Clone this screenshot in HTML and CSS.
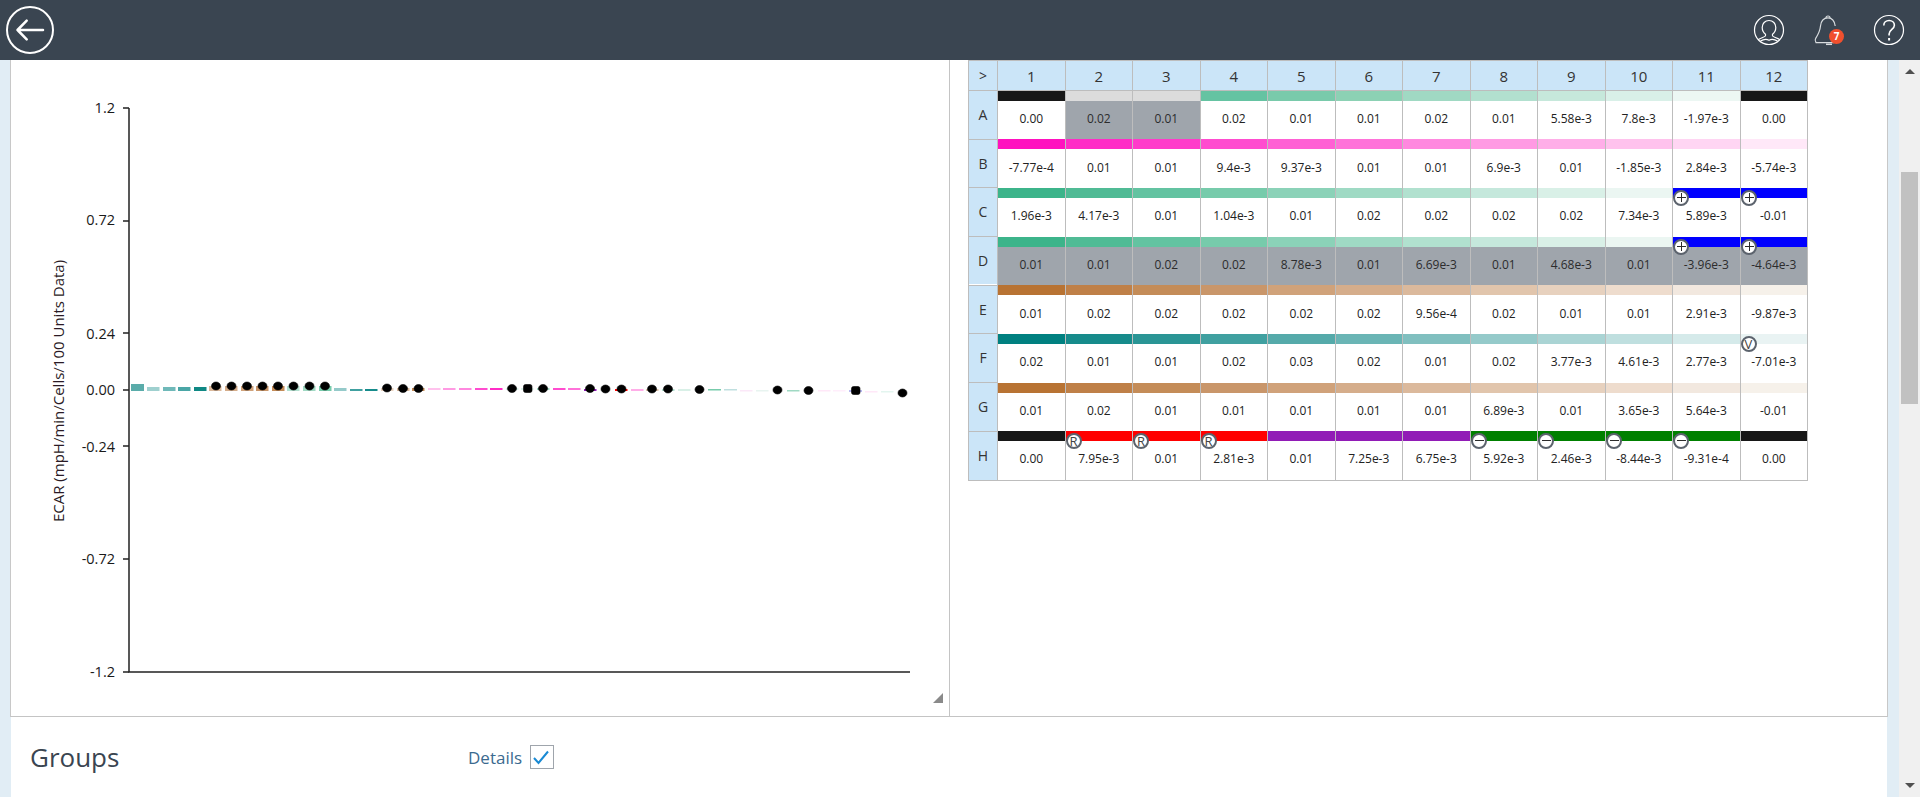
FILE: index.html
```html
<!DOCTYPE html>
<html lang="en">
<head>
    <meta charset="UTF-8">
    <title>ECAR Plate View</title>
    <link rel="stylesheet" href="styles.css">
</head>
<body>
    <header class="topbar">
        <svg class="back-icon" width="48" height="48" viewBox="0 0 48 48" fill="none" stroke="#fff" stroke-width="2" stroke-linecap="round" stroke-linejoin="round">
            <circle cx="24" cy="24" r="23"/>
            <path d="M37 24H11.500M20.700 14.700L11.500 24L20.700 33.300" stroke-width="2.500"/>
        </svg>
        <div class="topbar-icons">
            <svg width="32" height="32" viewBox="0 0 32 32" fill="none" stroke="#fff" stroke-width="1.200">
                <circle cx="16" cy="16" r="14.500"/>
                <path d="M16 6.500c-4 0-6.800 3-6.800 7 0 2.800 1.300 5.200 3.300 6.700v1.500c0 1.300-4.500 1.800-7.500 4"/>
                <path d="M16 6.500c4 0 6.800 3 6.800 7 0 2.800-1.300 5.200-3.300 6.700v1.500c0 1.300 4.500 1.800 7.500 4"/>
                <path d="M7.500 27c3-1.800 5.500-2.300 8.500-.8 3-1.500 5.500-1 8.500.8"/>
            </svg>
            <div class="bell">
                <svg width="32" height="32" viewBox="2 0 32 32" fill="none" stroke="#d8dcdf" stroke-width="1.200">
                    <path d="M15 4c0-2.700 4-2.700 4 0"/>
                    <path d="M17 3.800c-4.500 0-7 3.200-7.500 8.200-.4 4-2 8-4.800 12.300-.8 1.300-.6 3 .3 4.300h18"/>
                    <path d="M17 3.800c4 0 6.500 3 7.200 8.200"/>
                    <path d="M15 30.300h6" stroke-width="1.500"/>
                </svg>
                <span class="badge">7</span>
            </div>
            <svg width="32" height="32" viewBox="0 0 32 32" fill="none" stroke="#fff" stroke-width="1.200">
                <circle cx="16" cy="16" r="14.500"/>
                <path d="M10.800 11.500c0-3 2.300-5 5.300-5 3 0 5.300 2 5.300 4.800 0 4-5.300 4.300-5.300 8.700v1.500" stroke-width="1.600"/>
                <path d="M16.100 24v2.500" stroke-width="2"/>
            </svg>
        </div>
    </header>

    <div class="page">
        <main class="content">
            <section class="panels">
                <div class="chart-panel">
                    <svg class="chart" width="938" height="656" viewBox="11 60 938 656">
                        <text class="axis-title" transform="translate(64 391) rotate(-90)">ECAR (mpH/min/Cells/100 Units Data)</text>

                        <g class="axis-labels">
                            <text x="115" y="113">1.2</text>
                            <text x="115" y="225">0.72</text>
                            <text x="115" y="339">0.24</text>
                            <text x="115" y="395">0.00</text>
                            <text x="115" y="452">-0.24</text>
                            <text x="115" y="564">-0.72</text>
                            <text x="115" y="677">-1.2</text>
                        </g>
                        <g class="axis-lines">
                            <path d="M129 108V672H910"/>
                            <path d="M123 108H129M123 221H129M123 333H129M123 390H129M123 446H129M123 559H129M123 672H129"/>
                        </g>

                        <g class="bars">
                            <rect x="131" y="384" width="13" height="7" fill="#5aacaa"/>
                            <rect x="147" y="387" width="12.500" height="4" fill="#9fd0cf"/>
                            <rect x="163" y="387" width="12.500" height="4" fill="#6fb9b9"/>
                            <rect x="178" y="387" width="12.500" height="4" fill="#4aa6a6"/>
                            <rect x="194" y="387" width="12.500" height="4" fill="#0f8884"/>
                            <rect x="209" y="386" width="12.500" height="5" fill="#dbb99c"/>
                            <rect x="225" y="386" width="12.500" height="5" fill="#d5ad8b"/>
                            <rect x="241" y="386" width="12.500" height="5" fill="#d0a27a"/>
                            <rect x="256" y="386" width="12.500" height="5" fill="#c9966a"/>
                            <rect x="272" y="386" width="12.500" height="5" fill="#c48c58"/>
                            <rect x="287" y="386" width="12.500" height="5" fill="#b2e0cf"/>
                            <rect x="303" y="386" width="12.500" height="5" fill="#a0d9c3"/>
                            <rect x="319" y="386" width="12.500" height="5" fill="#77cbab"/>
                            <rect x="334" y="388" width="12.500" height="3" fill="#95caca"/>
                            <rect x="350" y="389" width="12.500" height="2" fill="#40a0a0"/>
                            <rect x="365" y="389" width="12.500" height="2" fill="#168b8b"/>
                            <rect x="381" y="388" width="12.500" height="3" fill="#e7d1be"/>
                            <rect x="397" y="388" width="12.500" height="3" fill="#dbb99c"/>
                            <rect x="412" y="388" width="12.500" height="3" fill="#c48c58"/>
                            <rect x="428" y="388" width="12.500" height="2" fill="#ffc2ed"/>
                            <rect x="443" y="388" width="12.500" height="2" fill="#ff9ae3"/>
                            <rect x="459" y="388" width="12.500" height="2" fill="#ff88df"/>
                            <rect x="475" y="388" width="12.500" height="2" fill="#ff4ccf"/>
                            <rect x="490" y="388" width="12.500" height="2" fill="#ff2cc6"/>
                            <rect x="506" y="388" width="12.500" height="2" fill="#d9f0e7"/>
                            <rect x="521" y="388" width="12.500" height="2" fill="#d9f0e7"/>
                            <rect x="537" y="388" width="12.500" height="2" fill="#a0d9c3"/>
                            <rect x="553" y="388" width="12.500" height="2" fill="#ff4ccf"/>
                            <rect x="568" y="388" width="12.500" height="2" fill="#ff72d9"/>
                            <rect x="584" y="389" width="12.500" height="2" fill="#911cb6"/>
                            <rect x="615" y="389" width="12.500" height="2" fill="#ff0000"/>
                            <rect x="631" y="389" width="12.500" height="2" fill="#ffaee8"/>
                            <rect x="646" y="389" width="12.500" height="2" fill="#e1c5ac"/>
                            <rect x="662" y="389" width="12.500" height="2" fill="#b2e0cf"/>
                            <rect x="678" y="389" width="12.500" height="2" fill="#d9f0e7"/>
                            <rect x="708" y="389" width="13" height="1.500" fill="#77cbab"/>
                            <rect x="724" y="389" width="13" height="1.500" fill="#bfdfdf"/>
                            <rect x="740" y="390" width="12.500" height="1.500" fill="#fbe8f8"/>
                            <rect x="756" y="390" width="12.500" height="1.500" fill="#e8f4f0"/>
                            <rect x="787" y="390" width="12.500" height="1.500" fill="#a0d9c3"/>
                            <rect x="818" y="390" width="12.500" height="1.500" fill="#ffe8f8"/>
                            <rect x="833" y="390" width="12.500" height="1.500" fill="#ffeefb"/>
                            <rect x="849" y="390" width="13" height="2" fill="#b8b8f0"/>
                            <rect x="865" y="391" width="12.500" height="1.500" fill="#ffe8f8"/>
                            <rect x="881" y="391" width="12.500" height="1.500" fill="#e3f5ef"/>
                        </g>

                        <g class="dots">
                            <ellipse cx="216" cy="386" rx="4.500" ry="4"/>
                            <ellipse cx="231.500" cy="386" rx="4.500" ry="4"/>
                            <ellipse cx="247" cy="386" rx="4.500" ry="4"/>
                            <ellipse cx="262.500" cy="386" rx="4.500" ry="4"/>
                            <ellipse cx="278" cy="386" rx="4.500" ry="4"/>
                            <ellipse cx="293.500" cy="386" rx="4.500" ry="4"/>
                            <ellipse cx="309.500" cy="386" rx="4.500" ry="4"/>
                            <ellipse cx="325" cy="386" rx="4.500" ry="4"/>
                            <ellipse cx="387" cy="388" rx="4.500" ry="4"/>
                            <ellipse cx="403" cy="388.500" rx="4.500" ry="4"/>
                            <ellipse cx="418.500" cy="388.500" rx="4.500" ry="4"/>
                            <ellipse cx="512" cy="388.500" rx="4.500" ry="4"/>
                            <rect x="523.500" y="384.500" width="8.500" height="8" rx="2"/>
                            <ellipse cx="543" cy="388.500" rx="4.500" ry="4"/>
                            <ellipse cx="590" cy="388.500" rx="4.500" ry="4"/>
                            <ellipse cx="605.500" cy="389" rx="4.500" ry="4"/>
                            <ellipse cx="621.500" cy="389" rx="4.500" ry="4"/>
                            <ellipse cx="652" cy="389" rx="4.500" ry="4"/>
                            <ellipse cx="668" cy="389" rx="4.500" ry="4"/>
                            <ellipse cx="699.500" cy="389.500" rx="4.500" ry="4"/>
                            <ellipse cx="777.500" cy="390" rx="4.500" ry="4"/>
                            <ellipse cx="808.500" cy="390.500" rx="4.500" ry="4"/>
                            <rect x="851.500" y="386.500" width="8.500" height="8" rx="2"/>
                            <ellipse cx="902.500" cy="393" rx="4.500" ry="4"/>
                        </g>

                        <path class="handle" d="M933 703L943 693V703Z"/>
                    </svg>
                </div>

                <div class="plate-panel">
                    <table class="plate">
                        <thead>
                            <tr><th>&gt;</th><th>1</th><th>2</th><th>3</th><th>4</th><th>5</th><th>6</th><th>7</th><th>8</th><th>9</th><th>10</th><th>11</th><th>12</th></tr>
                        </thead>
                        <tbody>
                            <tr>
                                <th>A</th>
                                <td><i class="bar" style="background:#171717"></i>0.00</td>
                                <td class="off"><i class="bar" style="background:#dcdcdc"></i>0.02</td>
                                <td class="off"><i class="bar" style="background:#dcdcdc"></i>0.01</td>
                                <td><i class="bar" style="background:#65c3a2"></i>0.02</td>
                                <td><i class="bar" style="background:#79caab"></i>0.01</td>
                                <td><i class="bar" style="background:#8cd1b4"></i>0.01</td>
                                <td><i class="bar" style="background:#a0d9c3"></i>0.02</td>
                                <td><i class="bar" style="background:#b2e0cf"></i>0.01</td>
                                <td><i class="bar" style="background:#c6e8db"></i>5.58e-3</td>
                                <td><i class="bar" style="background:#d9f0e8"></i>7.8e-3</td>
                                <td><i class="bar" style="background:#ecf7f3"></i>-1.97e-3</td>
                                <td><i class="bar" style="background:#171717"></i>0.00</td>
                            </tr>
                            <tr>
                                <th>B</th>
                                <td><i class="bar" style="background:#ff12bf"></i>-7.77e-4</td>
                                <td><i class="bar" style="background:#ff2cc6"></i>0.01</td>
                                <td><i class="bar" style="background:#ff3bca"></i>0.01</td>
                                <td><i class="bar" style="background:#ff4ccf"></i>9.4e-3</td>
                                <td><i class="bar" style="background:#ff60d4"></i>9.37e-3</td>
                                <td><i class="bar" style="background:#ff72d9"></i>0.01</td>
                                <td><i class="bar" style="background:#ff88df"></i>0.01</td>
                                <td><i class="bar" style="background:#ff9ae3"></i>6.9e-3</td>
                                <td><i class="bar" style="background:#ffaee8"></i>0.01</td>
                                <td><i class="bar" style="background:#ffc2ed"></i>-1.85e-3</td>
                                <td><i class="bar" style="background:#ffd5f3"></i>2.84e-3</td>
                                <td><i class="bar" style="background:#ffe8f8"></i>-5.74e-3</td>
                            </tr>
                            <tr>
                                <th>C</th>
                                <td><i class="bar" style="background:#3cb48a"></i>1.96e-3</td>
                                <td><i class="bar" style="background:#50bb95"></i>4.17e-3</td>
                                <td><i class="bar" style="background:#63c3a1"></i>0.01</td>
                                <td><i class="bar" style="background:#77cbab"></i>1.04e-3</td>
                                <td><i class="bar" style="background:#8bd2b8"></i>0.01</td>
                                <td><i class="bar" style="background:#9fdac4"></i>0.02</td>
                                <td><i class="bar" style="background:#b1e1cf"></i>0.02</td>
                                <td><i class="bar" style="background:#c5e8dc"></i>0.02</td>
                                <td><i class="bar" style="background:#d9f0e7"></i>0.02</td>
                                <td><i class="bar" style="background:#ebf6f2"></i>7.34e-3</td>
                                <td><i class="bar" style="background:#0000ff"></i><b class="mark mark-plus"></b>5.89e-3</td>
                                <td><i class="bar" style="background:#0000ff"></i><b class="mark mark-plus"></b>-0.01</td>
                            </tr>
                            <tr class="row-end">
                                <th>D</th>
                                <td class="off"><i class="bar" style="background:#3cb48a"></i>0.01</td>
                                <td class="off"><i class="bar" style="background:#50bb95"></i>0.01</td>
                                <td class="off"><i class="bar" style="background:#63c3a1"></i>0.02</td>
                                <td class="off"><i class="bar" style="background:#77cbab"></i>0.02</td>
                                <td class="off"><i class="bar" style="background:#8bd2b8"></i>8.78e-3</td>
                                <td class="off"><i class="bar" style="background:#9fdac4"></i>0.01</td>
                                <td class="off"><i class="bar" style="background:#b1e1cf"></i>6.69e-3</td>
                                <td class="off"><i class="bar" style="background:#c5e8dc"></i>0.01</td>
                                <td class="off"><i class="bar" style="background:#d9f0e7"></i>4.68e-3</td>
                                <td class="off"><i class="bar" style="background:#ebf6f2"></i>0.01</td>
                                <td class="off"><i class="bar" style="background:#0000ff"></i><b class="mark mark-plus"></b>-3.96e-3</td>
                                <td class="off"><i class="bar" style="background:#0000ff"></i><b class="mark mark-plus"></b>-4.64e-3</td>
                            </tr>
                            <tr>
                                <th>E</th>
                                <td><i class="bar" style="background:#b87333"></i>0.01</td>
                                <td><i class="bar" style="background:#bf8048"></i>0.02</td>
                                <td><i class="bar" style="background:#c48c58"></i>0.02</td>
                                <td><i class="bar" style="background:#c9966a"></i>0.02</td>
                                <td><i class="bar" style="background:#d0a27a"></i>0.02</td>
                                <td><i class="bar" style="background:#d5ad8b"></i>0.02</td>
                                <td><i class="bar" style="background:#dbb99c"></i>9.56e-4</td>
                                <td><i class="bar" style="background:#e1c5ac"></i>0.02</td>
                                <td><i class="bar" style="background:#e7d1be"></i>0.01</td>
                                <td><i class="bar" style="background:#eedccd"></i>0.01</td>
                                <td><i class="bar" style="background:#f2e8df"></i>2.91e-3</td>
                                <td><i class="bar" style="background:#f6f1ea"></i>-9.87e-3</td>
                            </tr>
                            <tr>
                                <th>F</th>
                                <td><i class="bar" style="background:#008080"></i>0.02</td>
                                <td><i class="bar" style="background:#168b8b"></i>0.01</td>
                                <td><i class="bar" style="background:#2a9595"></i>0.01</td>
                                <td><i class="bar" style="background:#40a0a0"></i>0.02</td>
                                <td><i class="bar" style="background:#55aaaa"></i>0.03</td>
                                <td><i class="bar" style="background:#6ab5b5"></i>0.02</td>
                                <td><i class="bar" style="background:#80bfbf"></i>0.01</td>
                                <td><i class="bar" style="background:#95caca"></i>0.02</td>
                                <td><i class="bar" style="background:#aad4d4"></i>3.77e-3</td>
                                <td><i class="bar" style="background:#bfdfdf"></i>4.61e-3</td>
                                <td><i class="bar" style="background:#d5eaea"></i>2.77e-3</td>
                                <td><i class="bar" style="background:#e9f3f3"></i><b class="mark">V</b>-7.01e-3</td>
                            </tr>
                            <tr>
                                <th>G</th>
                                <td><i class="bar" style="background:#b87333"></i>0.01</td>
                                <td><i class="bar" style="background:#bf8048"></i>0.02</td>
                                <td><i class="bar" style="background:#c48c58"></i>0.01</td>
                                <td><i class="bar" style="background:#c9966a"></i>0.01</td>
                                <td><i class="bar" style="background:#d0a27a"></i>0.01</td>
                                <td><i class="bar" style="background:#d5ad8b"></i>0.01</td>
                                <td><i class="bar" style="background:#dbb99c"></i>0.01</td>
                                <td><i class="bar" style="background:#e1c5ac"></i>6.89e-3</td>
                                <td><i class="bar" style="background:#e7d1be"></i>0.01</td>
                                <td><i class="bar" style="background:#eedccd"></i>3.65e-3</td>
                                <td><i class="bar" style="background:#f2e8df"></i>5.64e-3</td>
                                <td><i class="bar" style="background:#f6f1ea"></i>-0.01</td>
                            </tr>
                            <tr>
                                <th>H</th>
                                <td><i class="bar" style="background:#171717"></i>0.00</td>
                                <td><i class="bar" style="background:#ff0000"></i><b class="mark">R</b>7.95e-3</td>
                                <td><i class="bar" style="background:#ff0000"></i><b class="mark">R</b>0.01</td>
                                <td><i class="bar" style="background:#ff0000"></i><b class="mark">R</b>2.81e-3</td>
                                <td><i class="bar" style="background:#911cb6"></i>0.01</td>
                                <td><i class="bar" style="background:#911cb6"></i>7.25e-3</td>
                                <td><i class="bar" style="background:#911cb6"></i>6.75e-3</td>
                                <td><i class="bar" style="background:#008000"></i><b class="mark mark-minus"></b>5.92e-3</td>
                                <td><i class="bar" style="background:#008000"></i><b class="mark mark-minus"></b>2.46e-3</td>
                                <td><i class="bar" style="background:#008000"></i><b class="mark mark-minus"></b>-8.44e-3</td>
                                <td><i class="bar" style="background:#008000"></i><b class="mark mark-minus"></b>-9.31e-4</td>
                                <td><i class="bar" style="background:#171717"></i>0.00</td>
                            </tr>
                        </tbody>
                    </table>
                </div>
            </section>

            <section class="groups">
                <h2>Groups</h2>
                <label class="details">Details
                    <span class="checkbox">
                        <svg width="22" height="22" viewBox="0 0 22 22" fill="none" stroke="#1a8ad4" stroke-width="2"><path d="M3 12L7.500 17L17 5.500"/></svg>
                    </span>
                </label>
            </section>
        </main>
        <aside class="scrollbar">
            <span class="arrow-up"></span>
            <div class="thumb"></div>
            <span class="arrow-down"></span>
        </aside>
    </div>
</body>
</html>
```

FILE: styles.css
```css
* {
    box-sizing: border-box;
}
html, body {
    margin: 0;
    height: 100%;
    overflow: hidden;
}
body {
    font-family: "Open Sans", sans-serif;
    background-color: #e1edf5;
    color: #222;
}

.topbar {
    height: 60px;
    background-color: #3a4551;
    display: flex;
    align-items: center;
    justify-content: space-between;
    padding: 0 15px 0 6px;
}
.topbar-icons {
    display: flex;
    align-items: center;
    gap: 28px;
}
.bell {
    position: relative;
    width: 32px;
    height: 32px;
}
.bell svg {
    display: block;
}
.badge {
    position: absolute;
    left: 16px;
    top: 15px;
    width: 15px;
    height: 15px;
    border-radius: 50%;
    background-color: #f0502e;
    color: #fff;
    font-size: 10px;
    font-weight: 700;
    line-height: 15px;
    text-align: center;
}

.page {
    display: flex;
    height: 737px;
    padding-left: 10px;
}
.content {
    width: 1878px;
}
.panels {
    display: flex;
    height: 657px;
    background: #fff;
    border-left: 1px solid #c8c8c8;
    border-right: 1px solid #c8c8c8;
    border-bottom: 1px solid #c4c4c4;
}
.chart-panel {
    width: 939px;
    border-right: 1px solid #c4c4c4;
}
.chart {
    display: block;
}
.axis-title {
    font-size: 15px;
    fill: #2a1a25;
    text-anchor: middle;
}
.axis-labels text {
    font-size: 14.500px;
    fill: #1a1a1a;
    text-anchor: end;
}
.axis-lines path {
    fill: none;
    stroke: #222;
    stroke-width: 1.500;
}
.dots {
    fill: #000;
    stroke: #000;
    stroke-width: 0.600;
}
.handle {
    fill: #8a8a8a;
}

.plate-panel {
    padding-left: 18px;
}
.plate {
    border-collapse: collapse;
    table-layout: fixed;
    width: 839px;
    font-size: 12px;
}
.plate th {
    background-color: #cbe5f8;
    border: 1px solid #bdbdbd;
    font-size: 14px;
    font-weight: 400;
    color: #333;
    width: 29px;
    vertical-align: middle;
    padding: 0 0 1px;
}
.plate thead th {
    height: 30px;
    width: 67.500px;
    padding: 0;
    font-size: 15px;
}
.plate thead th:first-child {
    width: 29px;
    font-size: 14px;
}
.plate tbody th {
    height: 48.700px;
}
.plate .row-end th {
    box-shadow: inset 0 -1px #fff;
}
.plate td {
    position: relative;
    height: 48.700px;
    border-left: 1px solid #bdbdbd;
    border-right: 1px solid #bdbdbd;
    text-align: center;
    vertical-align: middle;
    padding: 8px 0 0;
    line-height: 16px;
}
.plate tbody tr:last-child td {
    border-bottom: 1px solid #bdbdbd;
}
.plate td.off {
    background-color: #9fa5ac;
    color: #2c2c2c;
}
.bar {
    position: absolute;
    left: 0;
    right: 0;
    top: 0;
    height: 10px;
}
.mark {
    position: absolute;
    left: 0;
    top: 2px;
    width: 16px;
    height: 16px;
    border: 2px solid #5c636d;
    border-radius: 50%;
    background-color: #fff;
    color: #444;
    font-size: 13px;
    font-weight: 400;
    line-height: 12px;
    text-align: center;
}
.mark-plus::before,
.mark-plus::after,
.mark-minus::before {
    content: "";
    position: absolute;
    background-color: #2c2c2c;
}
.mark-plus::before,
.mark-minus::before {
    left: 2px;
    right: 1px;
    top: 5px;
    height: 1px;
}
.mark-plus::after {
    top: 1px;
    bottom: 2px;
    left: 6px;
    width: 1px;
}

.groups {
    display: flex;
    align-items: center;
    height: 80px;
    margin: 0 1px;
    background: #fff;
    padding: 0 0 0 19px;
}
.groups h2 {
    width: 438px;
    margin: 0;
    font-size: 26px;
    font-weight: 400;
    color: #3a4551;
}
.details {
    display: flex;
    align-items: center;
    gap: 8px;
    font-size: 17px;
    color: #3b6a8f;
}
.checkbox {
    display: block;
    width: 24px;
    height: 24px;
    border: 1px solid #9fa5ac;
}
.checkbox svg {
    display: block;
}

.scrollbar {
    position: relative;
    flex: 1;
    margin-left: 11px;
    background-color: #f0f0f0;
}
.thumb {
    position: absolute;
    left: 2px;
    right: 2px;
    top: 112px;
    height: 232px;
    background-color: #c1c1c1;
}
.arrow-up,
.arrow-down {
    position: absolute;
    left: 6px;
    width: 0;
    height: 0;
    border-left: 5px solid transparent;
    border-right: 5px solid transparent;
}
.arrow-up {
    top: 9px;
    border-bottom: 5px solid #505050;
}
.arrow-down {
    bottom: 9px;
    border-top: 5px solid #505050;
}
```
